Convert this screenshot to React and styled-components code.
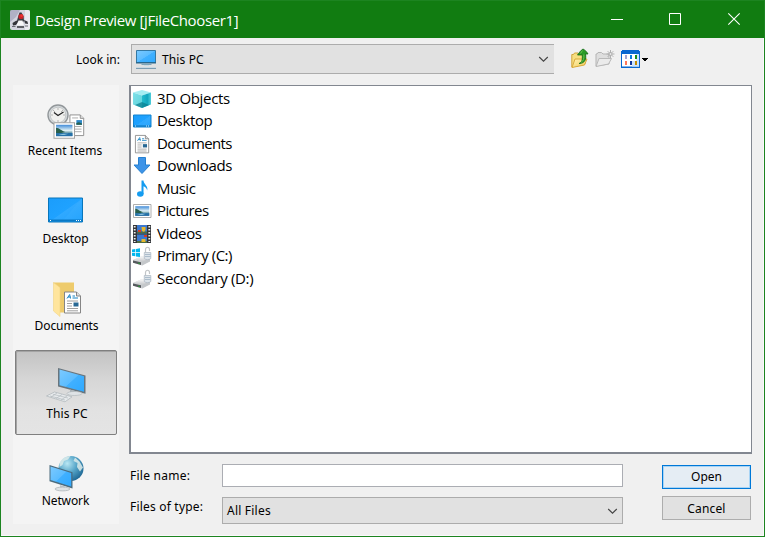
import React from "react";
import styled, { createGlobalStyle, css } from "styled-components";

const Global = createGlobalStyle`
  * { box-sizing: border-box; }
  html, body { margin: 0; padding: 0; overflow: hidden; }
  svg { display: block; flex: none; overflow: visible; }
`;

const Window = styled.div`
  width: 765px;
  height: 537px;
  display: flex;
  flex-direction: column;
  border: 1px solid #1c8420;
  background: #f0f0f0;
  box-shadow: inset -1px -1px 0 #fbf8fb;
  color: #000;
  font: 12px/16px "Noto Sans", sans-serif;
`;

const TitleBar = styled.header`
  height: 37px;
  flex: none;
  display: flex;
  align-items: center;
  padding-left: 9px;
  background: #117c11;
  color: #fff;
`;

const Title = styled.h1`
  flex: 1;
  margin: 0 0 0 5px;
  font: 400 15px/20px "Open Sans", "Noto Sans", sans-serif;
  letter-spacing: ${(p) => p.$track}px;
  white-space: nowrap;
`;

const CaptionButton = styled.button`
  width: 58.5px;
  height: 34px;
  margin-bottom: 2px;
  padding: 0;
  border: 0;
  background: transparent;
  display: grid;
  place-items: center;
`;

const CaptionButtons = styled.div`
  display: flex;
  padding-right: 1px;
`;

const LookRow = styled.div`
  height: 47px;
  flex: none;
  display: flex;
  align-items: flex-start;
  padding-top: 6px;
`;

const Text = styled.span`
  white-space: nowrap;
  letter-spacing: ${(p) => p.$track || 0}px;
`;

const LookLabel = styled.div`
  width: 130px;
  padding: 8px 11px 0 0;
  text-align: right;
`;

const Combo = styled.div`
  width: ${(p) => p.$w}px;
  height: ${(p) => p.$h}px;
  display: flex;
  align-items: center;
  gap: 5px;
  padding: 0 ${(p) => (p.$open ? 5 : 4)}px 0 4px;
  border: 1px solid #acacac;
  ${(p) => p.$open && css`border-right: 0;`}
  background: #e1e1e1;
  & > span { flex: 1; padding-top: ${(p) => (p.$open ? 2 : 0)}px; }
`;

const Tools = styled.div`
  display: flex;
  align-items: center;
  height: 29px;
  margin-left: 17px;
  gap: 6px;
`;

const Middle = styled.div`
  flex: 1;
  display: flex;
  padding-left: 12px;
`;

const Places = styled.nav`
  width: 106px;
  height: 439px;
  margin-right: 10px;
  padding: 2.5px 2px 0;
  background: #f4f4f4;
`;

const Place = styled.div`
  width: 102px;
  height: 85px;
  margin-bottom: 2.5px;
  padding-top: ${(p) => (p.$active ? 15 : 16)}px;
  display: flex;
  flex-direction: column;
  align-items: center;
  gap: ${(p) => (p.$low ? 4 : 3)}px;
  & > span { padding-${(p) => (p.$shift < 0 ? "right" : "left")}: ${(p) => Math.abs(p.$shift) * 2}px; }
  ${(p) => p.$active && css`
    border: 1px solid #7f7f7f;
    border-radius: 2px;
    background: linear-gradient(#c3c3c3, #d6d6d6 34%, #e2e2e2 72%, #e4e4e4);
    box-shadow: inset 1px 1px 0 #a4a4a4;
  `}
`;

const Main = styled.div`
  width: 623px;
  display: flex;
  flex-direction: column;
`;

const FileList = styled.div`
  height: 369px;
  padding-top: 1.5px;
  border: solid #828790;
  border-width: 1px 1px 2px 2px;
  background: #fff;
  font: 15px/20px "Open Sans", "Noto Sans", sans-serif;
`;

const FileRow = styled.div`
  height: 22.5px;
  display: flex;
  align-items: center;
  gap: 5px;
  padding-left: 1px;
  & > span { padding-bottom: 2px; }
`;

const Form = styled.div`
  display: flex;
  justify-content: space-between;
  padding: 10px 1px 0 0;
`;

const Fields = styled.div`
  display: grid;
  grid-template-columns: 93px 401px;
  grid-template-rows: 23px 27px;
  row-gap: 10px;
`;

const FieldLabel = styled.label`
  padding: ${(p) => p.$top}px 0 0 1px;
`;

const Input = styled.input`
  width: 401px;
  height: 23px;
  padding: 0 4px;
  border: 1px solid #abadb3;
  border-radius: 0;
  background: #fff;
  outline: none;
`;

const Actions = styled.div`
  display: flex;
  flex-direction: column;
  gap: 7px;
  padding-top: 1px;
`;

const Button = styled.button`
  width: 89px;
  height: 24px;
  padding: ${(p) => (p.$primary ? "0 0 1px" : "1px 0 0")};
  border: 1px solid #adadad;
  background: #e1e1e1;
  color: #000;
  font: inherit;
  ${(p) => p.$primary && css`
    border-color: #0078d7;
    background: #e5edf4;
    box-shadow: inset 0 0 0 1px #a8d4f5;
  `}
`;

const Chevron = () => (
  <svg width="11" height="8" viewBox="0 0 11 8" fill="none" stroke="#444" strokeWidth="1.1"><path d="M1.2 2 5.5 6.2 9.8 2" /></svg>
);

const Gradients = () => (
  <svg width="0" height="0" viewBox="0 0 1 1">
    <defs>
      <linearGradient id="blue" x1="0" y1="0" x2="1" y2="1"><stop offset="0" stopColor="#1b9dfb" /><stop offset=".5" stopColor="#1fa2ff" /><stop offset=".52" stopColor="#30a9ff" /><stop offset="1" stopColor="#1ca0fd" /></linearGradient>
      <linearGradient id="screen" x1="0" y1="0" x2="1" y2="1"><stop offset="0" stopColor="#7ccaff" /><stop offset=".5" stopColor="#5bbcff" /><stop offset=".52" stopColor="#40b0ff" /><stop offset="1" stopColor="#2fa9ff" /></linearGradient>
      <linearGradient id="folder" x1="0" y1="0" x2="1" y2="1"><stop offset="0" stopColor="#fff5b8" /><stop offset="1" stopColor="#f1c851" /></linearGradient>
      <linearGradient id="sky" x1="0" y1="0" x2="0" y2="1"><stop offset="0" stopColor="#3f8ad8" /><stop offset=".5" stopColor="#e0f1f5" /><stop offset=".7" stopColor="#6f9fac" /><stop offset="1" stopColor="#2e6f9e" /></linearGradient>
      <radialGradient id="globe" cx=".35" cy=".3" r=".75"><stop offset="0" stopColor="#b9e7f3" /><stop offset=".5" stopColor="#57a6c9" /><stop offset="1" stopColor="#1e6794" /></radialGradient>
      <linearGradient id="metal" x1="0" y1="0" x2="0" y2="1"><stop offset="0" stopColor="#f8f8f8" /><stop offset="1" stopColor="#c6c8cb" /></linearGradient>
      <linearGradient id="cubeLeft" x1="0" y1="0" x2="1" y2="1"><stop offset="0" stopColor="#7fe0e8" /><stop offset="1" stopColor="#5cd3dc" /></linearGradient>
      <linearGradient id="cubeRight" x1="0" y1="0" x2="1" y2="0"><stop offset="0" stopColor="#24bccd" /><stop offset=".6" stopColor="#12a6be" /><stop offset="1" stopColor="#52cedb" /></linearGradient>
    </defs>
  </svg>
);

const Picture = ({ x, y, w, h }) => (
  <g transform={`translate(${x} ${y}) scale(${w / 20} ${h / 15})`}>
    <path d="M0 0h20v15H0z" fill="#fff" stroke="#a3a3a3" strokeWidth="1" />
    <path d="M2 2h16v11H2z" fill="url(#sky)" />
    <path d="M2 5c3 0 5 3 9 4l-4 1H2z" fill="#285f4c" />
    <path d="M2 10h16v3H2z" fill="#2671a8" /><path d="m4 12 5-1.400 5 .2-4 1.200z" fill="#8ac2dc" />
  </g>
);

const Page = ({ x, y, s = 1 }) => (
  <g transform={`translate(${x} ${y}) scale(${s})`}>
    <path d="M.5.5h12l4 4v17H.5z" fill="#fff" stroke="#858585" />
    <path d="M12.500.5v4h4" fill="#ddd" stroke="#858585" />
    <path d="m3 7 2.700-4 .8 4M4 5.500h2.500M8.500 4.500h2.500M8.500 6.500h5.500" fill="none" stroke="#1683c2" strokeWidth="1" />
    <path d="M3 9.500h11M3 12h5M3 14.500h5M3 17h11M3 19.300h11" stroke="#a0a0a0" />
    <path d="M9.500 11h5v4h-5z" fill="#286894" />
  </g>
);

const PlainPage = ({ x, y, s }) => (
  <g transform={`translate(${x} ${y}) scale(${s})`}>
    <path d="M.5.5h12l4 4v20H.5z" fill="#fff" stroke="#858585" />
    <path d="M12.500.5v4h4" fill="#ddd" stroke="#858585" />
    <path d="M3 4h7M3 14h11M3 17h11M3 20h11" stroke="#a0a0a0" />
    <path d="M8 6.500h6.500v5.500H8z" fill="#2b87c8" /><path d="M8 10l3-1 3.500 1.500V12H8z" fill="#28604f" />
  </g>
);

const JavaIcon = () => (
  <svg width="20" height="20" viewBox="0 0 20 20">
    <rect width="20" height="20" rx="2" fill="#d3d4de" />
    <path d="M1 0h9L6 7l-6 5V1z" fill="#9c9eb6" opacity=".65" /><path d="M15 0h4l1 1v18l-1 1h-4z" fill="#f2f2f6" opacity=".7" />
    <path d="M9.500 2.500h2l2 4 .5 4-1 2H6.500L8 7z" fill="#3a3b42" />
    <path d="M2.500 13 6.500 10.500l1.500 2-2 2.500-3 .5zM14 10l3.500 1.500.5 2.500-3-.5z" fill="#34353b" />
    <path d="M8.500 10.500h4l1.500 5H6.500z" fill="#f7f7f8" /><circle cx="11" cy="6.500" r="2.600" fill="#c9262b" /><circle cx="11.500" cy="5.800" r="1.200" fill="#f2332f" />
    <path d="M2 16.500h3.500M15 16h3" stroke="#6a6b74" /><path d="M7 17h7" stroke="#3f4046" strokeWidth="1.600" />
  </svg>
);

const ComboPC = () => (
  <svg width="21" height="20" viewBox="0 0 21 20">
    <path d="M.5 1.500h19v12H.5z" fill="url(#screen)" stroke="#3478a3" /><path d="M0 13h20v1.500H0z" fill="#28688e" />
    <path d="M5.500 15.500h10" stroke="#7fa4b7" /><path d="M8 16.500h5" stroke="#c7dce7" /><path d="M0 18.500h20" stroke="#c9d9e3" /><path d="M0 19.500h20" stroke="#7e9db1" />
  </svg>
);

const UpFolder = () => (
  <svg width="18" height="21" viewBox="0 0 18 21">
    <path d="M.8 19V6.500h1.700L3.500 5H7l1 1.500h6V16z" fill="#f7de80" stroke="#d0a53c" />
    <path d="m1 19.500 3-8.500h12l-2.500 6z" fill="url(#folder)" stroke="#d9aa3b" />
    <path d="M8 15.500c3-1 3.500-3 3.300-8.500H6.500c1.500-2 3-4.500 5.500-6 2 1 4 3 5 5h-2.500c1 5-.5 9.500-6.500 9.500z" fill="#2a9a27" stroke="#126b15" strokeWidth=".8" />
    <path d="M11.500 2.500 9.500 5.500M12.800 6.500c.4 4-.4 6.500-2.800 8" fill="none" stroke="#66c34c" />
  </svg>
);

const NewFolder = () => (
  <svg width="20" height="19" viewBox="0 0 20 19">
    <path d="M1 17V5h1l1-1.500h3.500L8 5h6v10z" fill="#dedede" stroke="#b5b5b5" /><path d="m1 17.500 3-8h12.500l-3 5.500z" fill="#ebebeb" stroke="#b9b9b9" />
    <path d="M15.500 1v8M11.500 5h8M12.700 2.200l5.600 5.600M18.300 2.200l-5.600 5.600" stroke="#b0b0b0" /><circle cx="15.500" cy="5" r="1.500" fill="#e4e4e4" stroke="#999" strokeWidth=".6" />
  </svg>
);

const ViewIcon = () => (
  <svg width="28" height="18" viewBox="0 0 28 18">
    <path d="M1 0h17v1h1v17H0V1h1z" fill="#0867d0" /><path d="M1 4h17v12.500H1z" fill="#fff" /><path d="M11 11h7v5.500h-7zM15 4h3v7h-3z" fill="#cce4ff" />
    <path d="M4 5h2v4H4z" fill="#a3a3cf" /><path d="M9 5h2v4H9z" fill="#087be0" /><path d="M14 5h2v4h-2z" fill="#178c16" />
    <path d="M4 11h2v4H4z" fill="#ff7657" /><path d="M9 11h2v4H9z" fill="#14379a" /><path d="M14 11h2v4h-2z" fill="#c58b00" /><path d="M21 8h6v1h-1v1h-1v1h-2v-1h-1V9h-1z" />
  </svg>
);

const placeArt = {
  recent: <><PlainPage x={22.500} y={10.500} s={0.86} /><circle cx="11" cy="11" r="10" fill="#d6dadc" stroke="#92979a" strokeWidth="1.400" /><circle cx="11" cy="11" r="7.800" fill="#f0f0ee" stroke="#c3c7c9" /><path d="M11 4.500v1M4.500 11h1M16.500 11h1M11 16.500v1M6.500 6.500l1 1M15.500 6.500l-1 1" stroke="#777" /><path d="m7 8.500 4 3 5.500-3.500" fill="none" stroke="#222" strokeWidth="1.200" /><Picture x={7} y={18.700} w={20.500} h={15.500} /></>,
  desktop: <g transform="translate(1 .5)"><path d="M.5 6.500h34v24H.5z" fill="url(#blue)" stroke="#0876bb" /><path d="M33.500 7 14 30h19.500z" fill="#54baff" opacity=".15" /><path d="M1 29h33" stroke="#0879c5" strokeWidth="2" /><path d="M2 29h1M28 29h1M30 29h1M32 29h1" stroke="#fff" /></g>,
  documents: <><path d="M6.500 3.500h20.500v30h-14z" fill="#eecb6c" /><path d="m6.500 3.500 6.500 5V37.500l-6.500-5.500z" fill="#ffe59d" stroke="#f0d384" strokeWidth=".6" /><Page x={17} y={12.500} s={1} /></>,
  pc: <><path d="m11 2 27.500 7.500v18.300L11 20.500z" fill="#69757d" /><path d="m12.500 3.500 24.500 6.800v15.500l-24.500-6.500z" fill="url(#screen)" /><path d="m23 23.500 6 1.700v2.300l-6-1z" fill="#aab2b8" /><ellipse cx="27.500" cy="27.500" rx="7.500" ry="2" fill="#dfe3e6" stroke="#aab1b5" strokeWidth=".6" /><path d="m-.5 30 8-4L25 30.800l-7 5z" fill="#e7eaec" stroke="#a5adb1" strokeWidth=".6" /><path d="m3 30 15 4M6 28.300 21 32M4 31l6-4M9 32.500l6-4M14 34l6-4" stroke="#b3babe" strokeWidth=".7" /></>,
  network: <><circle cx="24" cy="14.500" r="12.500" fill="url(#globe)" /><path d="M12.500 9c2-4 6-7 11-7l-2.500 3.500-4 1.500-1.500 4-3 2zM28 3.500l4.500 4 3.500 6-3 4-3-4.500.500-4-4-2z" fill="#dcebea" opacity=".85" /><path d="m2.500 11 23 7.300V34.500l-23-7.300z" fill="#4b6b7d" /><path d="m3.500 12.500 20.700 6.500v13.500L3.500 26z" fill="url(#screen)" /><path d="m13 31 5 1.500V35h-5z" fill="#bdc6cb" /><ellipse cx="15.500" cy="35" rx="7.500" ry="1.900" fill="#dfe3e5" stroke="#a8afb3" strokeWidth=".7" /></>,
};

const places = [
  ["recent", "Recent Items", 0.08, -1], ["desktop", "Desktop", -0.1, -0.5], ["documents", "Documents", -0.1, 0.5],
  ["pc", "This PC", 0.1, 1], ["network", "Network", -0.1, -0.5],
];

const drive = <><path d="m1 14 8-3.500 9 .5v4l-8 4.500L1 16.500z" fill="#d2d4d6" /><path d="m1 14 8-3.500 9 1-8 4z" fill="url(#metal)" /><path d="m1 14.500 8 1.700v2.800L1 16.700z" fill="#55595d" /><path d="m9 16 9-3.500v3l-8 4z" fill="#c4c7ca" /><path d="m6 17 2 .5" stroke="#2c9c3a" /><path d="M13.500 6.500V3.500c0-3 4-3 4 0V5" fill="none" stroke="#c2c5c8" strokeWidth="1.200" /><path d="M12.300 6.500h6.500v6c-1.500 1.500-5 1.500-6.500 0z" fill="#dde4ea" stroke="#a9b5c0" strokeWidth=".7" /><path d="M13 8.500h5.500M13 10.500h5.500" stroke="#9fb3c4" strokeWidth=".8" /></>;

const fileArt = {
  cube: <><path d="M1 3.500 10 1l9 2.500-9 3z" fill="#a5edf2" /><path d="m1 3.500 9 3V19l-9-3.500z" fill="url(#cubeLeft)" /><path d="m19 3.500-9 3V19l9-3.500z" fill="url(#cubeRight)" /><path d="m3 16 7-3 7 3-7 3z" fill="#0b7f90" opacity=".75" /></>,
  desktop: <><path d="M1.500 4h17.500v12H1.500z" fill="url(#blue)" stroke="#1283cf" /><path d="M18 5 9 15h9z" fill="#54b9ff" opacity=".15" /><path d="M1 15h18" stroke="#0f79c0" strokeWidth="1.200" /><path d="M3 15h1M14 15h1M16 15h1" stroke="#d7efff" /></>,
  document: <Page x={3} y={1} s={0.83} />,
  down: <path d="M6.500 1.500h7V9H18L10 17.500 2 9h4.500z" fill="#3d94e8" stroke="#2680d0" />,
  music: <><ellipse cx="8.300" cy="15" rx="3.300" ry="2.800" fill="#149cf0" /><path d="M9.500 1.500h2c0 4 5 5 3.700 10-.5-3-2.500-4-3.700-4.300V15h-2z" fill="#149cf0" /></>,
  picture: <Picture x={1.500} y={3.500} w={17.500} h={13} />,
  video: <><path d="M1 1h18v18H1z" fill="#34373b" /><path d="M2.700 2v16M17.300 2v16" stroke="#eee" strokeWidth="1.800" strokeDasharray="1.500 1.500" /><path d="M5 1h10v8.500H5zM5 10.500h10V19H5z" fill="#3b78cf" /><path d="M5 7.500h10v2H5zM5 17h10v2H5z" fill="#4d6d45" /><path d="M9.500 3h4v3l-1.500 2-2-1zM9.500 15h4v3h-4z" fill="#e7b82d" /><path d="M6 6h3v2H6zM12 11h3v2h-3z" fill="#d83b25" /></>,
  primary: <>{drive}<path d="M0 3.500 3.300 3v3.300H0zM4 2.900l4-.6v4H4zM0 7h3.300v3.300L0 9.800zM4 7h4v4l-4-.6z" fill="#00b7ee" /></>,
  drive,
};

const files = [
  ["cube", "3D Objects", -0.32], ["desktop", "Desktop", -0.36], ["document", "Documents", -0.6], ["down", "Downloads", -0.35],
  ["music", "Music", -0.5], ["picture", "Pictures", -0.6], ["video", "Videos", -0.3], ["primary", "Primary (C:)", -0.5], ["drive", "Secondary (D:)", -0.32],
];

export default function App() {
  return (
    <>
      <Global />
      <Gradients />
      <Window>
        <TitleBar>
          <JavaIcon />
          <Title $track={-0.38}>Design Preview [jFileChooser1]</Title>
          <CaptionButtons>
            <CaptionButton aria-label="Minimize"><svg width="12" height="12" stroke="#fff"><path d="M0 6.500h12" /></svg></CaptionButton>
            <CaptionButton aria-label="Maximize"><svg width="12" height="12" fill="none" stroke="#fff"><path d="M.5.5h11v11H.5z" /></svg></CaptionButton>
            <CaptionButton aria-label="Close"><svg width="12" height="12" stroke="#fff" strokeWidth="1.1"><path d="m.3.3 11.400 11.400M11.700.3.3 11.700" /></svg></CaptionButton>
          </CaptionButtons>
        </TitleBar>
        <LookRow>
          <LookLabel><Text>Look in:</Text></LookLabel>
          <Combo $w={423} $h={30} $open><ComboPC /><Text $track={0.12}>This PC</Text><Chevron /></Combo>
          <Tools><UpFolder /><NewFolder /><ViewIcon /></Tools>
        </LookRow>
        <Middle>
          <Places>
            {places.map(([kind, label, track, shift]) => (
              <Place key={kind} $active={kind === "pc"} $low={kind === "pc" || kind === "desktop"} $shift={shift}>
                <svg width="38" height="36" viewBox="0 0 38 36">{placeArt[kind]}</svg>
                <Text $track={track}>{label}</Text>
              </Place>
            ))}
          </Places>
          <Main>
            <FileList>
              {files.map(([kind, label, track]) => (
                <FileRow key={label}>
                  <svg width="20" height="20" viewBox="0 0 20 20">{fileArt[kind]}</svg>
                  <Text $track={track}>{label}</Text>
                </FileRow>
              ))}
            </FileList>
            <Form>
              <Fields>
                <FieldLabel $top={4}><Text $track={0.25}>File name:</Text></FieldLabel>
                <Input aria-label="File name" />
                <FieldLabel $top={2}><Text $track={0.2}>Files of type:</Text></FieldLabel>
                <Combo $w={401} $h={27}><Text $track={0.22}>All Files</Text><Chevron /></Combo>
              </Fields>
              <Actions>
                <Button $primary><Text>Open</Text></Button>
                <Button><Text $track={0.15}>Cancel</Text></Button>
              </Actions>
            </Form>
          </Main>
        </Middle>
      </Window>
    </>
  );
}
